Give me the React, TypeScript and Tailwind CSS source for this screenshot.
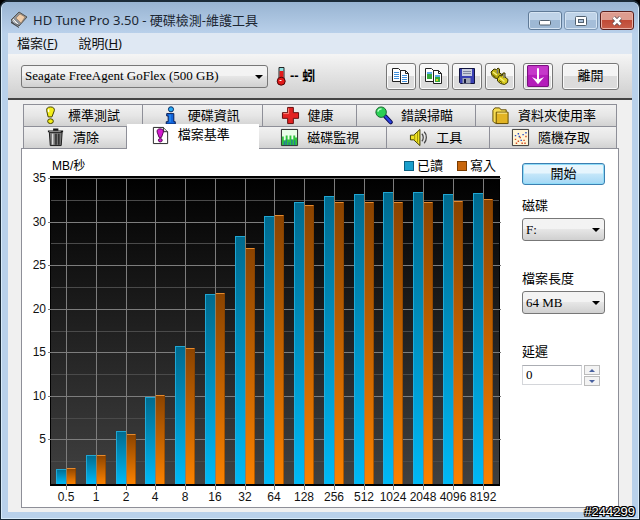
import { useState } from "react";
import type { ReactNode } from "react";

const results = [
  { size: "0.5", read: 1.6, write: 1.7 },
  { size: "1", read: 3.2, write: 3.2 },
  { size: "2", read: 6.0, write: 5.6 },
  { size: "4", read: 9.9, write: 10.1 },
  { size: "8", read: 15.7, write: 15.5 },
  { size: "16", read: 21.7, write: 21.8 },
  { size: "32", read: 28.4, write: 27.0 },
  { size: "64", read: 30.6, write: 30.7 },
  { size: "128", read: 32.2, write: 31.9 },
  { size: "256", read: 32.9, write: 32.3 },
  { size: "512", read: 33.2, write: 32.2 },
  { size: "1024", read: 33.4, write: 32.3 },
  { size: "2048", read: 33.4, write: 32.2 },
  { size: "4096", read: 33.2, write: 32.4 },
  { size: "8192", read: 33.3, write: 32.6 },
];

const PLOT = { left: 28, right: 478, top: 1, zero: 307 };

function yOf(value: number) {
  return Math.round(PLOT.zero - (value * (PLOT.zero - PLOT.top - 1)) / 35);
}

function xOf(index: number) {
  return Math.round(44 + index * 29.75);
}

function Chart() {
  return (
    <svg
      viewBox="0 0 480 330"
      className="block w-full overflow-visible font-['Liberation_Sans',sans-serif]"
      role="img"
      aria-label="檔案基準"
    >
      <defs>
        <linearGradient id="plot" x1="0" y1="0" x2="0" y2="1">
          <stop offset="0" stopColor="#000" />
          <stop offset="1" stopColor="#414141" />
        </linearGradient>
        <linearGradient id="read" x1="0" y1="0" x2="0" y2="1">
          <stop offset="0" stopColor="#006a8e" />
          <stop offset="1" stopColor="#00b9f6" />
        </linearGradient>
        <linearGradient id="write" x1="0" y1="0" x2="0" y2="1">
          <stop offset="0" stopColor="#8a4300" />
          <stop offset="1" stopColor="#fb8200" />
        </linearGradient>
      </defs>
      <rect x={PLOT.left} y="0" width="450" height="310" fill="url(#plot)" />
      <g shapeRendering="crispEdges">
        <path d="M28 1H478" stroke="#000" strokeWidth="2" />
        <path d="M28.5 1V310M477.5 1V310" stroke="#000" />
        <path d="M28 309H478" stroke="#000" strokeWidth="2" />
        {[2.5, 7.5, 12.5, 17.5, 22.5, 27.5, 32.5].map((v) => (
          <rect key={v} x="29" y={yOf(v)} width="448" height="1" fill="#4a4a4a" />
        ))}
        {[5, 10, 15, 20, 25, 30, 35].map((v) => (
          <rect key={v} x="26" y={yOf(v)} width="453" height="1" fill="#7d7d7d" />
        ))}
        {results.map((r, i) => (
          <rect key={r.size} x={xOf(i)} y="2" width="1" height="312" fill="#7d7d7d" />
        ))}
        {results.map((r, i) => {
          const x = xOf(i);
          const read = yOf(r.read);
          const write = yOf(r.write);
          return (
            <g key={r.size}>
              <rect x={x - 10} y={read} width="10" height={308 - read} fill="url(#read)" />
              <path
                d={`M${x - 9.5} 308V${read + 0.5}H${x}`}
                fill="none"
                stroke="#27b4e2"
                strokeOpacity="0.8"
              />
              <rect x={x + 1} y={write} width="9" height={308 - write} fill="url(#write)" />
              <path d={`M${x + 1} ${write + 0.5}H${x + 10}`} stroke="#e58a2e" />
              <path d={`M${x + 9.5} ${write}V308`} stroke="#7a3d00" strokeOpacity="0.55" />
              <path d={`M${x + 0.5} ${Math.min(read, write)}V308`} stroke="#8b8068" />
            </g>
          );
        })}
      </g>
      <g fontSize="12" fill="#111">
        {[5, 10, 15, 20, 25, 30, 35].map((v) => (
          <text key={v} x="24" y={yOf(v) + 4} textAnchor="end">
            {v}
          </text>
        ))}
        {results.map((r, i) => (
          <text key={r.size} x={xOf(i)} y="325" textAnchor="middle">
            {r.size}
          </text>
        ))}
      </g>
    </svg>
  );
}

function Icon({ children, className = "size-5" }: { children: ReactNode; className?: string }) {
  return (
    <svg viewBox="0 0 20 20" className={`shrink-0 ${className}`} aria-hidden="true">
      {children}
    </svg>
  );
}

const benchmarkIcon = (
  <Icon className="size-[19px]">
    <path d="M10 1C7 1 5.500 2.500 6 5l1.500 6.500h4L14 5c.5-2.500-1-4-4-4z" fill="#f3ee1b" stroke="#3c3a00" />
    <ellipse cx="10" cy="16" rx="3" ry="2.500" fill="#f3ee1b" stroke="#3c3a00" />
    <path d="M8 3.500v3" stroke="#fff" strokeWidth="1.500" />
  </Icon>
);

const infoIcon = (
  <Icon className="size-[19px]">
    <circle cx="10.500" cy="3.500" r="2.700" fill="#28aaf5" stroke="#06275e" />
    <path d="M6 8h7.500v8.500H15V19H5.500v-2.500h2V10.500H6z" fill="#1265dc" stroke="#061a50" />
    <path d="M9.500 9v8" stroke="#38a4ff" />
  </Icon>
);

const healthIcon = (
  <Icon className="size-[19px]">
    <path d="M7 1.500h6V7h5.500v6H13v5.500H7V13H1.500V7H7z" fill="#e32222" stroke="#5e0808" />
    <path d="M8 2.500v5.500H2.500" fill="none" stroke="#ff8b7c" />
  </Icon>
);

const scanIcon = (
  <Icon className="size-[19px]">
    <path d="M12 11l5.500 6" stroke="#0a0a50" strokeWidth="4.500" strokeLinecap="round" />
    <path d="M12 11l5.500 6" stroke="#2b40dd" strokeWidth="2.500" strokeLinecap="round" />
    <circle cx="7.500" cy="6.500" r="5.500" fill="#2bcf55" stroke="#15602a" />
    <path d="M4 6c.5-2 2-3 4-3" fill="none" stroke="#c2ffcf" strokeWidth="1.500" />
  </Icon>
);

const folderIcon = (
  <Icon className="size-[19px]">
    <path d="M2 4.500 4 2h5l1.500 2H16v14H4l-2-2z" fill="#f6dc52" stroke="#5f4a00" />
    <path d="M5.500 6.500H18V18.500H5.500z" fill="#e2b424" stroke="#5f4a00" />
    <path d="M6.500 7.500H17" stroke="#fff2a0" />
  </Icon>
);

const trashIcon = (
  <Icon className="size-[19px]">
    <path d="M3.500 4.500h13.500l-1 14h-11.500z" fill="#777" stroke="#161616" />
    <path d="M2 3.500h16M7.500 1.500h5.500" stroke="#161616" strokeWidth="2" />
    <path d="M3.500 3.500h12" stroke="#aaa" />
    <path d="M7 6v11.500" stroke="#ddd" strokeWidth="1.500" />
    <path d="M10.500 6v11.500M13.500 6v11.500" stroke="#2b2b2b" strokeWidth="1.500" />
  </Icon>
);

const fileBenchIcon = (
  <Icon className="size-[19px]">
    <path d="M2.500 1.500H13l4.500 4.500v12.500h-15z" fill="#fff" stroke="#222" />
    <path d="M13 1.500V6h4.500" fill="#ddd" stroke="#222" />
    <path d="M9.500 3C7 3 6 4.500 6.500 6.500L8.500 12h2.500l2-5.500C13.500 4.500 12 3 9.500 3z" fill="#d41bd0" stroke="#50084e" />
    <ellipse cx="9.800" cy="15" rx="2" ry="1.800" fill="#d41bd0" stroke="#50084e" />
  </Icon>
);

const monitorIcon = (
  <Icon className="size-[19px]">
    <path d="M1.500 1.500h17v17h-17z" fill="#e9ffe9" stroke="#222" />
    <path d="M2 18V9h2v4h2V8h2v4h2V8h2v4h2V8h2v2h2v8z" fill="#2ec43c" />
    <path d="M4.500 18v-4M6.500 18v-6M9.500 18v-3M12.500 18v-6M15.500 18v-5" stroke="#2263b8" />
  </Icon>
);

const speakerIcon = (
  <Icon className="size-[19px]">
    <path d="M1.500 7.500H5l6.500-6v17L5 12.500H1.500z" fill="#f0e326" stroke="#3b3800" />
    <path d="M6 7v6M9 4v11" stroke="#9c9200" />
    <path d="M13.500 6c2 2 2 6 0 8M16 4c3 3 3 9 0 12" fill="none" stroke="#444" strokeWidth="1.300" />
  </Icon>
);

const randomIcon = (
  <Icon className="size-[19px]">
    <path d="M1.500 1.500h17v17h-17z" fill="#fff5d6" stroke="#333" />
    <path d="M4 12h1.500M7 14h1.500M9 10h1.500M13 13h1.500M14 16h1.500M5 16h1.500M11 16h1.500M15 9h1.500" stroke="#d44b22" strokeWidth="1.500" />
    <path d="M4 8h1.500M7 6h1.500M10 13h1.500M12 7h1.500M15 5h1.500M8 9h1.500" stroke="#2b4bc4" strokeWidth="1.500" />
  </Icon>
);

const copyIcon = (
  <Icon>
    <path d="M1.500 2.500h6l3 3v10h-9z" fill="#fff" stroke="#222" />
    <path d="M3 6.500h5M3 8.500h5M3 10.500h5M3 12.500h5" stroke="#3f8fdc" />
    <path d="M9.500 4.500h5l3 3v10h-8z" fill="#fff" stroke="#222" />
    <path d="M14.500 4.500v3h3" fill="none" stroke="#222" />
    <path d="M11 9.500h5M11 11.500h5M11 13.500h5M11 15.500h5" stroke="#3f8fdc" />
  </Icon>
);

const copyImageIcon = (
  <Icon>
    <path d="M1.500 2.500h6l3 3v10h-9z" fill="#fff" stroke="#222" />
    <path d="M3 6h5v7H3z" fill="#35a83c" />
    <path d="M3 6h5v2H3z" fill="#5aa9ea" />
    <path d="M9.500 4.500h5l3 3v10h-8z" fill="#fff" stroke="#222" />
    <path d="M14.500 4.500v3h3" fill="none" stroke="#222" />
    <path d="M11 9h5v7h-5z" fill="#35a83c" />
    <path d="M11 9h5v2h-5z" fill="#5aa9ea" />
    <path d="M12 13h2v2h-2z" fill="#e3cf28" />
  </Icon>
);

const saveIcon = (
  <Icon>
    <path d="M2.500 2.500h15v15h-14l-1-1z" fill="#3940b4" stroke="#11133e" />
    <path d="M5 3h10v7H5z" fill="#c9cede" />
    <path d="M6 5.500h8M6 7.500h8" stroke="#8087a0" />
    <path d="M5.500 12h8v5.500h-8z" fill="#9ea3b3" />
    <path d="M7 13h2v4H7z" fill="#16183c" />
  </Icon>
);

const optionsIcon = (
  <Icon>
    <path d="M1 6l3-3 2.500.5L8 2l1.500 1v4l2 1-1 3-3 1.500-3-.5-2.500-2.500z" fill="#b9ad12" stroke="#3a3500" />
    <path d="M7.500 12.500l2-3 2.500.5 1-3h2v4l3 2.500-.5 3-3 2-4-1-3-2.500z" fill="#d6c91e" stroke="#3a3500" />
    <path d="M7.500 3.500v4M14 8v4" stroke="#777" strokeWidth="1.500" />
    <path d="M3 6l4 3M10 12l4.500 3.500" stroke="#f5ee7c" strokeWidth="1.500" />
    <path d="M2.500 9l3 2M9 14.500l3 2" stroke="#5d5500" />
  </Icon>
);

const updateIcon = (
  <Icon className="size-[22px]">
    <rect x="0.500" y="0.500" width="19" height="19" rx="1" fill="#b41cba" stroke="#7a1180" />
    <path d="M1 1h18v8H1z" fill="#d653da" fillOpacity="0.5" />
    <path d="M10 3v11" stroke="#fff" strokeWidth="1.800" />
    <path d="M4.500 11 10 13.500 15.500 11 10 17.500z" fill="#fff" />
  </Icon>
);

type Tab = { label: string; icon: ReactNode; grow: string };

const backTabs: Tab[] = [
  { label: "標準測試", icon: benchmarkIcon, grow: "grow-[119] basis-0" },
  { label: "硬碟資訊", icon: infoIcon, grow: "grow-[120] basis-0" },
  { label: "健康", icon: healthIcon, grow: "grow-[92] basis-0" },
  { label: "錯誤掃瞄", icon: scanIcon, grow: "grow-[119] basis-0" },
  { label: "資料夾使用率", icon: folderIcon, grow: "grow-[142] basis-0" },
];

const frontTabs: Tab[] = [
  { label: "清除", icon: trashIcon, grow: "grow-[102] basis-0" },
  { label: "檔案基準", icon: fileBenchIcon, grow: "grow-[133] basis-0" },
  { label: "磁碟監視", icon: monitorIcon, grow: "grow-[129] basis-0" },
  { label: "工具", icon: speakerIcon, grow: "grow-[102] basis-0" },
  { label: "隨機存取", icon: randomIcon, grow: "grow-[127] basis-0" },
];

function TabButton({ tab, active }: { tab: Tab; active?: boolean }) {
  return (
    <button
      type="button"
      role="tab"
      aria-selected={!!active}
      className={`flex items-center justify-center gap-2 pr-[5px] whitespace-nowrap ${tab.grow} ${
        active
          ? "relative z-10 -mt-[2px] -mb-px bg-white pb-[3px]"
          : "border-t border-r border-[#8e8f98] bg-linear-to-b from-[#f1f1f1] via-[#e6e6e6] to-[#d2d2d2]"
      }`}
    >
      {tab.icon}
      {tab.label}
    </button>
  );
}

function ToolButton({ label, children }: { label: string; children: ReactNode }) {
  return (
    <button
      type="button"
      aria-label={label}
      className="flex h-[27px] w-[30px] items-center justify-center rounded-[3px] border border-[#777] bg-linear-to-b from-[#f6f6f6] from-50% to-[#dcdcdc] to-50% inset-shadow-[0_0_0_1px_#fafafa]"
    >
      {children}
    </button>
  );
}

function Select({ id, label, options }: { id: string; label?: string; options: string[] }) {
  return (
    <div className="relative">
      <select
        id={id}
        aria-label={label}
        className="block h-[23px] w-full appearance-none rounded-[3px] border border-[#777] bg-linear-to-b from-[#f3f3f3] from-45% via-[#e6e6e6] via-50% to-[#d0d0d0] pr-5 pl-[3px] font-['Liberation_Serif',serif] text-[13px] leading-5 text-black"
      >
        {options.map((o) => (
          <option key={o}>{o}</option>
        ))}
      </select>
      <svg
        viewBox="0 0 8 4"
        className="pointer-events-none absolute top-[10px] right-[5px] h-1 w-2"
        aria-hidden="true"
      >
        <path d="M0 0h8L4 4z" />
      </svg>
    </div>
  );
}

export default function App() {
  const [delay, setDelay] = useState(0);

  return (
    <div className="relative bg-black font-['Liberation_Sans','Noto_Sans_CJK_TC',sans-serif] text-[13px] leading-5 text-black">
      <div className="flex min-h-screen flex-col rounded-t-lg border border-t-2 border-[#1b2b38] bg-[#b9d1ea] px-[7px] pb-[7px] inset-shadow-[0_0_0_1px_#d9ecfa]">
        <header className="-mx-[6px] flex h-[31px] shrink-0 items-start rounded-t-md bg-linear-to-b from-[#98b4d2] to-[#b9d0ea] pr-[4px] pl-[8px]">
          <div className="flex grow items-center gap-[5px] pt-[8px]">
            <svg viewBox="0 0 18 18" className="size-[18px] shrink-0" aria-hidden="true">
              <path d="M1 9 9 1l8 5-8 9z" fill="#8e9398" stroke="#55534e" />
              <path d="M6 7l4-4 5 3-4 6z" fill="#f0cda9" stroke="#8a6a4c" strokeWidth="0.5" />
              <path d="M1 10l8 6v1L1 12z" fill="#444" />
              <path d="M3 8l5 5M2.500 9.500l4 3" stroke="#f2f2f2" />
            </svg>
            <h1 className="font-['Noto_Sans','Noto_Sans_CJK_TC',sans-serif] text-[13px] leading-5 whitespace-nowrap text-[#1c2733]">
              HD Tune Pro 3.50 - 硬碟檢測-維護工具
            </h1>
          </div>
          <div className="mt-[9px] flex gap-[2px]">
            <button
              type="button"
              aria-label="最小化"
              className="flex h-[19px] w-[34px] items-center justify-center rounded-[3px] border border-[#5f7a97] bg-linear-to-b from-[#bfd3e8] from-50% to-[#9db8d4] to-50% inset-shadow-[0_0_0_1px_#d5e4f3]"
            >
              <svg viewBox="0 0 12 6" className="mt-1 h-[6px] w-3">
                <rect x="0.500" y="0.500" width="11" height="4.500" rx="1" fill="#fff" stroke="#51606f" />
              </svg>
            </button>
            <button
              type="button"
              aria-label="最大化"
              className="flex h-[19px] w-[34px] items-center justify-center rounded-[3px] border border-[#7d97b3] bg-linear-to-b from-[#bfd3e8] from-50% to-[#a5bed9] to-50% inset-shadow-[0_0_0_1px_#d5e4f3]"
            >
              <svg viewBox="0 0 12 10" className="h-[10px] w-3">
                <rect x="0.500" y="0.500" width="11" height="9" rx="1" fill="#fff" stroke="#51606f" />
                <rect x="3.500" y="3.500" width="5" height="3" fill="#a9c0da" stroke="#51606f" />
              </svg>
            </button>
            <button
              type="button"
              aria-label="關閉"
              className="flex h-[19px] w-[34px] items-center justify-center rounded-[3px] border border-[#5a1f1c] bg-linear-to-b from-[#dd9c8f] from-45% via-[#c04a36] via-50% to-[#c8604c] inset-shadow-[0_0_0_1px_#e8b0a5]"
            >
              <svg viewBox="0 0 12 10" className="h-[10px] w-3">
                <path d="M2.500 1.500l7 7M9.500 1.500l-7 7" stroke="#5b4b50" strokeWidth="4" />
                <path d="M2.500 1.500l7 7M9.500 1.500l-7 7" stroke="#fff" strokeWidth="2.500" />
              </svg>
            </button>
          </div>
        </header>

        <div className="flex grow flex-col bg-[#f0f0f0]">
          <nav className="flex h-[21px] shrink-0 items-center gap-[21px] bg-[#dfe8f3] pb-px pl-[9px] font-['Noto_Sans','Noto_Sans_CJK_TC',sans-serif] text-[#111]">
            <button type="button">
              檔案(<u>F</u>)
            </button>
            <button type="button">
              說明(<u>H</u>)
            </button>
          </nav>

          <div className="flex h-[46px] shrink-0 items-center border-b-2 border-[#444] bg-linear-to-b from-[#f5f5f5] to-[#cfcfcf] px-[13px]">
            <div className="w-[247px]">
              <Select id="drive" label="硬碟" options={["Seagate FreeAgent GoFlex (500 GB)"]} />
            </div>
            <svg viewBox="0 0 10 20" className="ml-2 h-5 w-[10px]" aria-hidden="true">
              <path d="M3 1.500h5v11H3z" fill="#8de0e0" stroke="#222" />
              <path d="M3.500 5h4v9h-4z" fill="#e21a1a" />
              <circle cx="5.200" cy="15.200" r="4" fill="#e21a1a" stroke="#4a0505" />
              <path d="M3.500 14.500h2" stroke="#fff" />
            </svg>
            <span className="ml-1 font-bold">-- 蚓</span>
            <div className="ml-auto flex items-center gap-[3px]">
              <ToolButton label="複製文字">{copyIcon}</ToolButton>
              <ToolButton label="複製圖片">{copyImageIcon}</ToolButton>
              <ToolButton label="儲存">{saveIcon}</ToolButton>
              <ToolButton label="選項">{optionsIcon}</ToolButton>
            </div>
            <div className="ml-2 flex gap-[9px]">
              <ToolButton label="最小化至系統匣">{updateIcon}</ToolButton>
              <button
                type="button"
                className="h-[27px] w-[57px] rounded-[3px] border border-[#777] bg-linear-to-b from-[#f4f4f4] from-50% to-[#dcdcdc] to-50% inset-shadow-[0_0_0_1px_#fafafa]"
              >
                離開
              </button>
            </div>
          </div>

          <main className="flex grow flex-col px-[13px] pt-1 pb-1">
            <div role="tablist" className="mx-[2px] border-l border-[#8e8f98]">
              <div className="flex h-[22px]">
                {backTabs.map((t) => (
                  <TabButton key={t.label} tab={t} />
                ))}
              </div>
              <div className="flex h-[22px]">
                {frontTabs.map((t, i) => (
                  <TabButton key={t.label} tab={t} active={i === 1} />
                ))}
              </div>
            </div>

            <section className="flex grow border border-[#8e8f98] bg-white pr-[13px]">
              <div className="min-w-0 grow pt-[7px]">
                <div className="flex h-5 items-center pr-[6px] pl-[30px]">
                  <span className="text-[12px]">MB/秒</span>
                  <div className="ml-auto flex items-center gap-[14px]">
                    <span className="flex items-center gap-[3px]">
                      <i className="size-[10px] border border-[#0b5f80] bg-[#1a9fcc]" />
                      已讀
                    </span>
                    <span className="flex items-center gap-[3px]">
                      <i className="size-[10px] border border-[#7a3c00] bg-[#c8660c]" />
                      寫入
                    </span>
                  </div>
                </div>
                <Chart />
              </div>

              <div className="ml-5 w-[83px] shrink-0 pt-[14px]">
                <button
                  type="button"
                  className="block h-[22px] w-full rounded-[3px] border border-[#3c7fb1] bg-linear-to-b from-[#e6f5fd] from-45% via-[#c4e6f9] via-50% to-[#a4d8f5] leading-5 inset-shadow-[0_0_0_1px_#8fdcf8]"
                >
                  開始
                </button>
                <label htmlFor="disk" className="mt-[11px] mb-[2px] block">
                  磁碟
                </label>
                <Select id="disk" options={["F:"]} />
                <label htmlFor="length" className="mt-7 mb-[2px] block">
                  檔案長度
                </label>
                <Select id="length" options={["64 MB"]} />
                <label htmlFor="delay" className="mt-7 mb-[3px] block">
                  延遲
                </label>
                <div className="flex gap-[2px]">
                  <input
                    id="delay"
                    type="text"
                    value={delay}
                    onChange={(e) => setDelay(Number(e.target.value) || 0)}
                    className="h-5 w-[60px] border border-[#d4d6da] border-t-[#abadb3] px-[3px] font-['Liberation_Serif',serif] text-[13px]"
                  />
                  <div className="flex flex-col gap-px">
                    <button
                      type="button"
                      aria-label="增加"
                      onClick={() => setDelay(delay + 1)}
                      className="flex h-[10px] w-4 items-center justify-center border border-[#bbb] bg-[#f3f3f3]"
                    >
                      <svg viewBox="0 0 6 3" className="h-[3px] w-[6px]">
                        <path d="M0 3h6L3 0z" fill="#4a62a0" />
                      </svg>
                    </button>
                    <button
                      type="button"
                      aria-label="減少"
                      onClick={() => setDelay(Math.max(0, delay - 1))}
                      className="flex h-[10px] w-4 items-center justify-center border border-[#bbb] bg-[#f3f3f3]"
                    >
                      <svg viewBox="0 0 6 3" className="h-[3px] w-[6px]">
                        <path d="M0 0h6L3 3z" fill="#4a62a0" />
                      </svg>
                    </button>
                  </div>
                </div>
              </div>
            </section>
          </main>
        </div>
      </div>
      <span className="absolute right-[5px] bottom-0 text-[13px] leading-4 text-white [text-shadow:1px_0_#000,-1px_0_#000,0_1px_#000,0_-1px_#000,1px_1px_#000,-1px_-1px_#000,1px_-1px_#000,-1px_1px_#000]">
        #244299
      </span>
    </div>
  );
}
